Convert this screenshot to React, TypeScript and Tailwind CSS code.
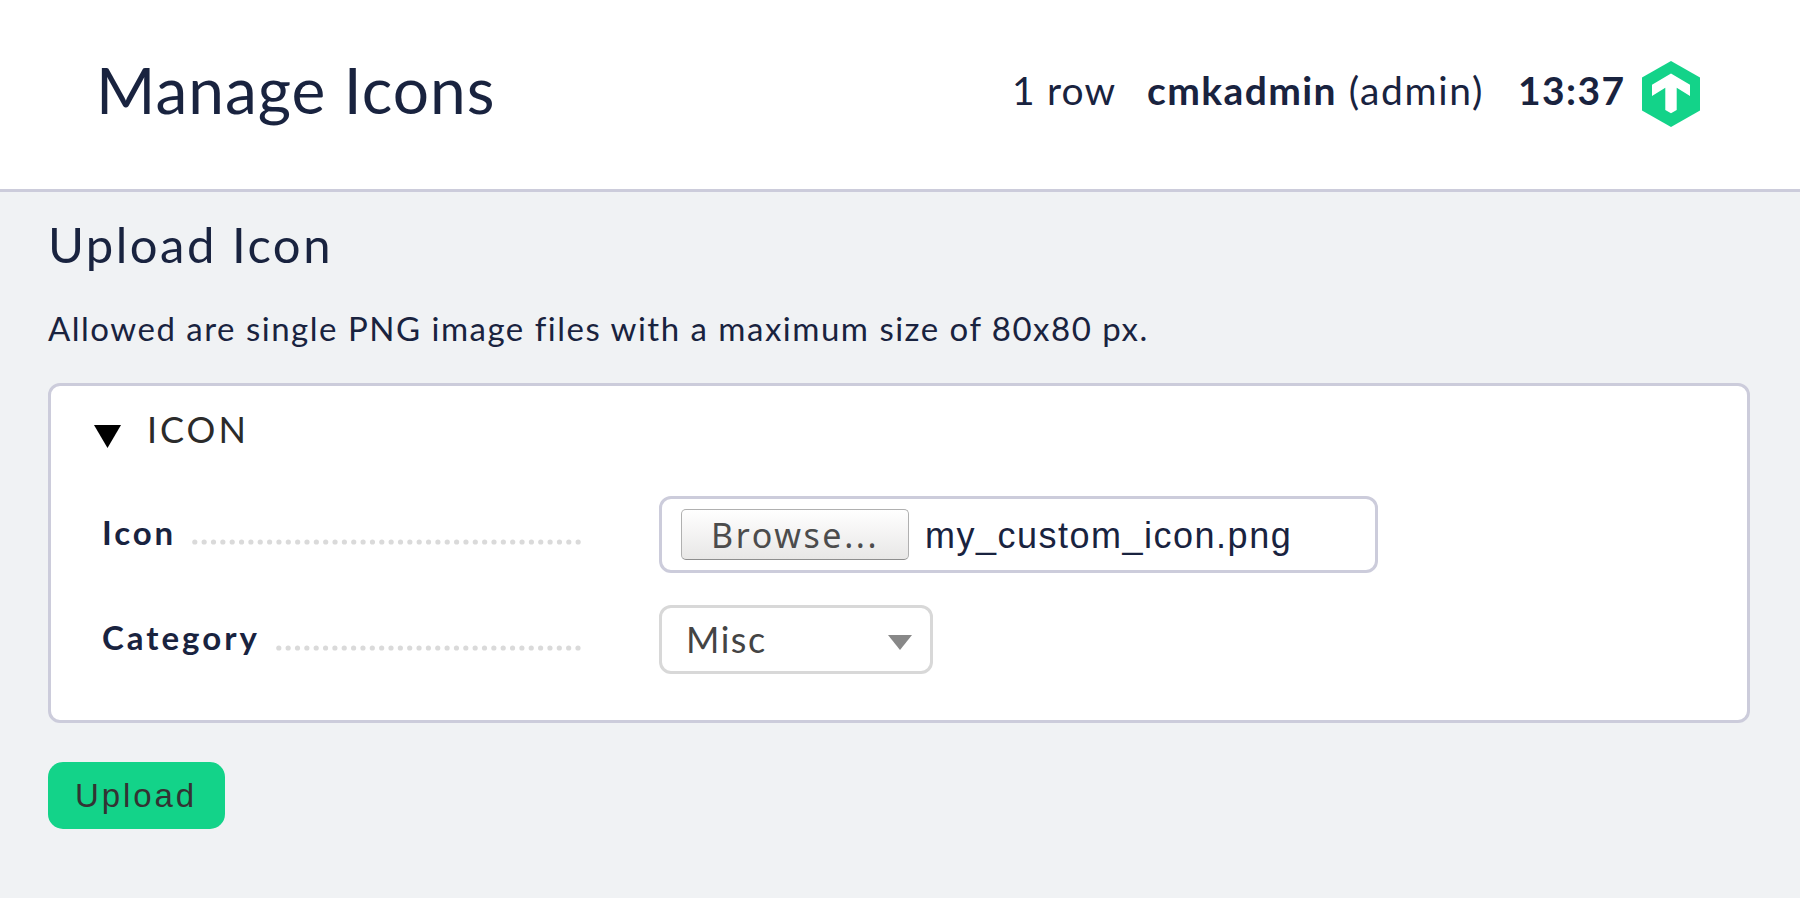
import React from "react";

function Logo() {
  return (
    <svg width="58" height="66" viewBox="0 0 58 66" className="block">
      <path d="M29 0 L58 16.5 V49.5 L29 66 L0 49.5 V16.5 Z" fill="#13d389" />
      <path d="M29 12.5 L48 23.8 V35 L34.7 26.7 V49 L29 52.3 L23.3 49 V26.7 L10 35 V23.8 Z" fill="#fff" />
    </svg>
  );
}

function Dots({ count }: { count: number }) {
  const width = (count - 1) * 9.35 + 5.6;
  return (
    <svg width={width} height="6" className="block shrink-0">
      {Array.from({ length: count }, (_, i) => (
        <circle key={i} cx={2.8 + i * 9.35} cy="3" r="2.6" fill="#dadada" />
      ))}
    </svg>
  );
}

export default function App() {
  return (
    <div className="h-[898px] w-[1800px] overflow-hidden bg-[#f0f2f4] font-['Lato','Carlito',sans-serif] text-[#19233f]">
      <header className="flex h-[192px] items-start justify-between border-b-[3px] border-[#ccccdb] bg-white pl-[96px] pr-[100px]">
        <h1 className="mt-[58px] whitespace-nowrap text-[64px] leading-[64px] tracking-[1px]">Manage Icons</h1>
        <div className="flex items-start whitespace-nowrap text-[39px] leading-[40px]">
          <span className="mt-[70px] w-[135px] tracking-[1.2px]">1 row</span>
          <span className="mt-[70px] w-[371px]">
            <b className="tracking-[1.4px]">cmkadmin</b>
            <span className="tracking-[1.65px]"> (admin)</span>
          </span>
          <b className="mt-[70px] w-[124px] tracking-[1.4px]">13:37</b>
          <div className="mt-[61px]">
            <Logo />
          </div>
        </div>
      </header>

      <main className="px-[48px] pt-[27px]">
        <h2 className="whitespace-nowrap text-[49px] leading-[50px] tracking-[2.5px]">Upload Icon</h2>
        <p className="mt-[41px] whitespace-nowrap text-[33px] leading-[36px] tracking-[1.5px]">
          Allowed are single PNG image files with a maximum size of 80x80 px.
        </p>

        <section className="mt-[37px] h-[340px] w-[1702px] rounded-[12px] border-[3px] border-[#ccccdb] bg-white pl-[51px] pt-[23px]">
          <div className="flex h-[87px] items-start text-[#2b2b2b]">
            <svg width="27" height="23" className="-ml-[8.5px] mt-[16px] block">
              <path d="M0 0 H27 L13.5 23 Z" fill="#000" />
            </svg>
            <span className="ml-[26.5px] text-[36px] leading-[40px] tracking-[3px]">ICON</span>
          </div>

          <div className="flex items-start">
            <div className="flex w-[557px] items-start pt-[18px]">
              <div className="flex w-[479px] items-start justify-between">
                <b className="text-[33px] leading-[36px] tracking-[2.9px]">Icon</b>
                <div className="mt-[25px]">
                  <Dots count={42} />
                </div>
              </div>
            </div>
            <div className="flex h-[77px] w-[719px] items-start rounded-[12px] border-[3px] border-[#ccccdb] bg-white pl-[19px] pt-[10px]">
              <button className="h-[51px] w-[228px] rounded-[5px] border border-[#b0b0b0] border-b-[#8e8e8e] bg-linear-to-b from-white to-[#e8e7e6] pl-[29px] text-left font-['Noto_Sans',sans-serif] text-[34px] leading-[48px] tracking-[2.6px] text-[#4c4c4c]">
                Browse...
              </button>
              <span className="ml-[16px] mt-[6px] whitespace-nowrap font-['Liberation_Sans',Arial,sans-serif] text-[36px] leading-[42px] tracking-[1.5px]">
                my_custom_icon.png
              </span>
            </div>
          </div>

          <div className="mt-[32px] flex items-start">
            <div className="flex w-[557px] items-start pt-[14px]">
              <div className="flex w-[479px] items-start justify-between">
                <b className="text-[33px] leading-[36px] tracking-[3px]">Category</b>
                <div className="mt-[26px]">
                  <Dots count={33} />
                </div>
              </div>
            </div>
            <div className="flex h-[69px] w-[274px] items-start justify-between rounded-[12px] border-[3px] border-[#d8d8d8] bg-white pl-[24px] pr-[18px]">
              <span className="mt-[11px] text-[36px] leading-[40px] tracking-[1.5px] text-[#444]">Misc</span>
              <svg width="24" height="15" className="mt-[27px] block">
                <path d="M0 0 H24 L12 15 Z" fill="#888" />
              </svg>
            </div>
          </div>
        </section>

        <button className="mt-[39px] block h-[67px] w-[177px] rounded-[15px] bg-[#13d389] pl-[27px] text-left font-['Liberation_Sans',Arial,sans-serif] text-[33px] leading-[66px] tracking-[2.9px] text-[#333]">
          Upload
        </button>
      </main>
    </div>
  );
}
